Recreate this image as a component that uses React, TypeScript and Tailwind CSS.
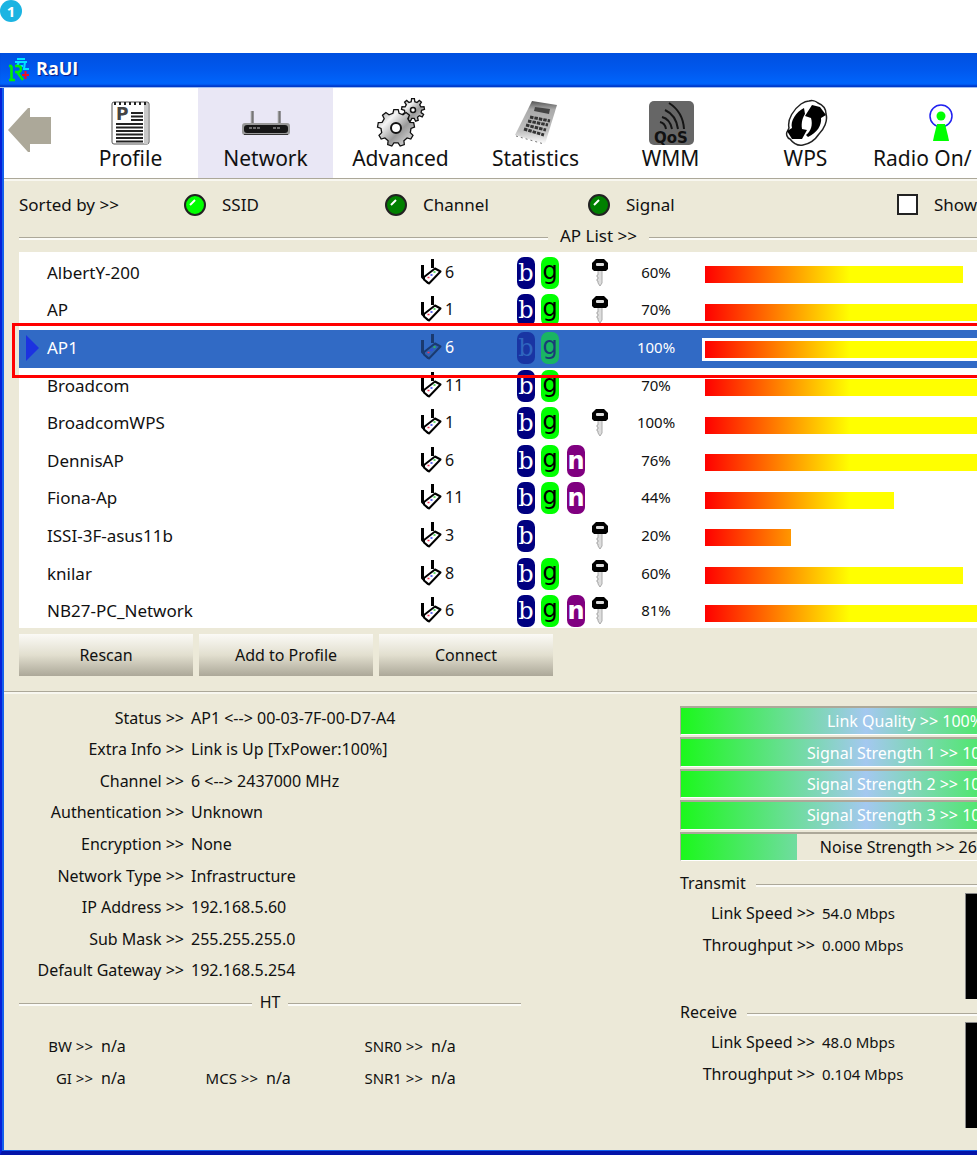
import React from 'react';
import clsx from 'clsx';

type Mode = 'b' | 'g' | 'n';

const accessPoints: { ssid: string; channel: number; modes: Mode[]; locked: boolean; signal: number; selected?: boolean }[] = [
  { ssid: 'AlbertY-200', channel: 6, modes: ['b', 'g'], locked: true, signal: 60 },
  { ssid: 'AP', channel: 1, modes: ['b', 'g'], locked: true, signal: 70 },
  { ssid: 'AP1', channel: 6, modes: ['b', 'g'], locked: false, signal: 100, selected: true },
  { ssid: 'Broadcom', channel: 11, modes: ['b', 'g'], locked: false, signal: 70 },
  { ssid: 'BroadcomWPS', channel: 1, modes: ['b', 'g'], locked: true, signal: 100 },
  { ssid: 'DennisAP', channel: 6, modes: ['b', 'g', 'n'], locked: false, signal: 76 },
  { ssid: 'Fiona-Ap', channel: 11, modes: ['b', 'g', 'n'], locked: false, signal: 44 },
  { ssid: 'ISSI-3F-asus11b', channel: 3, modes: ['b'], locked: true, signal: 20 },
  { ssid: 'knilar', channel: 8, modes: ['b', 'g'], locked: true, signal: 60 },
  { ssid: 'NB27-PC_Network', channel: 6, modes: ['b', 'g', 'n'], locked: true, signal: 81 },
];

const linkInfo = [
  ['Status', 'AP1 <--> 00-03-7F-00-D7-A4'],
  ['Extra Info', 'Link is Up [TxPower:100%]'],
  ['Channel', '6 <--> 2437000 MHz'],
  ['Authentication', 'Unknown'],
  ['Encryption', 'None'],
  ['Network Type', 'Infrastructure'],
  ['IP Address', '192.168.5.60'],
  ['Sub Mask', '255.255.255.0'],
  ['Default Gateway', '192.168.5.254'],
];

const htInfo = ['BW', '', 'SNR0', 'GI', 'MCS', 'SNR1'];

const meters = [
  { label: 'Link Quality', value: 100 },
  { label: 'Signal Strength 1', value: 100 },
  { label: 'Signal Strength 2', value: 100 },
  { label: 'Signal Strength 3', value: 100 },
  { label: 'Noise Strength', value: 26 },
];

const gearPath = (cx: number, cy: number, outer: number, inner: number, teeth: number) => {
  const points: string[] = [];
  const step = (Math.PI * 2) / teeth;
  for (let i = 0; i < teeth; i++) {
    [[-0.3, inner], [-0.17, outer], [0.17, outer], [0.3, inner]].forEach(([offset, r]) => {
      const a = (i + offset) * step - Math.PI / 2;
      points.push(`${(cx + r * Math.cos(a)).toFixed(1)},${(cy + r * Math.sin(a)).toFixed(1)}`);
    });
  }
  return `M${points.join('L')}Z`;
};

const AppLogo = () => (
  <svg width="22" height="24" viewBox="0 0 22 24" fill="none" aria-hidden="true">
    <path d="M9 1h8M7 4h12M11 4l-2 4h6M17 4l-1 7h5" stroke="#00e5ff" strokeWidth="2" />
    <path d="M1 8h3M3.500 8v14M1 22h6M7 8h3c4 0 4 6 0 6H7M9 14l6 8" stroke="#00f000" strokeWidth="2.500" />
    <path d="M14 17h7M17.500 13v8" stroke="#f01020" strokeWidth="2" />
  </svg>
);

const ProfileIcon = () => (
  <svg width="40" height="46" viewBox="0 0 40 46" aria-hidden="true">
    <rect x="1" y="2" width="37" height="42" rx="2" fill="#fff" stroke="#555" />
    <path d="M34 3v41M36 3v41" stroke="#c8c8c8" strokeWidth="2" />
    <path d="M4 2v3M9 2v3M14 2v3M19 2v3M24 2v3M29 2v3M34 2v3" stroke="#222" strokeWidth="2" />
    <text x="5" y="20" fontFamily="DejaVu Sans" fontWeight="bold" fontSize="17" fill="#444">P</text>
    <path d="M20 13h12M20 16.500h12M20 20h12M5 24h27M5 27.500h27M5 31h27M5 34.500h27M5 38h27M5 41.500h27" stroke="#222" strokeWidth="1.800" />
  </svg>
);

const RouterIcon = () => (
  <svg width="50" height="26" viewBox="0 0 50 26" aria-hidden="true">
    <path d="M11 1v13M38 1v13" stroke="#999" strokeWidth="2.500" />
    <path d="M12 1v13M39 1v13" stroke="#555" strokeWidth="1" />
    <rect x="1" y="13" width="48" height="12" rx="3" fill="#999" />
    <rect x="3" y="15" width="44" height="8" rx="3" fill="#161616" />
    <path d="M8 18h11M32 18h8" stroke="#8a8a8a" strokeWidth="1.500" strokeDasharray="3 1" />
    <path d="M3 24.500h44" stroke="#333" />
  </svg>
);

const GearsIcon = () => (
  <svg width="50" height="50" viewBox="0 0 50 50" aria-hidden="true">
    <defs>
      <linearGradient id="steel" x1="0" y1="0" x2="1" y2="1">
        <stop offset="0" stopColor="#888" />
        <stop offset="0.3" stopColor="#f4f4f4" />
        <stop offset="0.6" stopColor="#999" />
        <stop offset="1" stopColor="#eee" />
      </linearGradient>
    </defs>
    <path d={gearPath(37, 12, 11.5, 8.5, 9)} fill="url(#steel)" stroke="#111" strokeWidth="1.300" />
    <circle cx="37" cy="12" r="2.500" fill="#fff" stroke="#111" strokeWidth="1.500" />
    <path d={gearPath(20, 30, 18.5, 15, 9)} fill="url(#steel)" stroke="#111" strokeWidth="1.300" />
    <circle cx="20" cy="30" r="5" fill="#fff" stroke="#111" strokeWidth="2" />
  </svg>
);

const CalculatorIcon = () => (
  <svg width="44" height="46" viewBox="0 0 44 46" aria-hidden="true">
    <defs>
      <linearGradient id="calc" x1="0" y1="0" x2="0" y2="1">
        <stop offset="0" stopColor="#555" />
        <stop offset="0.2" stopColor="#aaa" />
        <stop offset="0.7" stopColor="#c0c0c0" />
        <stop offset="1" stopColor="#fff" />
      </linearGradient>
    </defs>
    <path d="M18 1L43 5L31 44L1 35Z" fill="url(#calc)" />
    <path d="M21 7l15 2-1 5-15-3z" fill="#444" />
    <path d="M16 17l20 4M14 21l20 4M12 25l20 5M10 29l20 6" stroke="#333" strokeWidth="3" strokeDasharray="3.500 1" />
    <path d="M2 36l28 8" stroke="#777" strokeDasharray="2 3" />
  </svg>
);

const QosIcon = () => (
  <svg width="46" height="46" viewBox="0 0 46 46" fill="none" aria-hidden="true">
    <rect x="1" y="1" width="45" height="44" rx="5" fill="#666" />
    <path d="M12 22q5 1 6 7M14 17q8 2 10 12M17 10q11 5 13 19M21 3q14 9 15 26" stroke="#151515" strokeWidth="2" />
    <text x="6" y="43" fontFamily="DejaVu Sans" fontWeight="bold" fontSize="15" fill="#111">QoS</text>
  </svg>
);

const WpsIcon = () => (
  <svg width="48" height="48" viewBox="0 0 48 48" aria-hidden="true">
    <path d="M27 2c3-1 7 0 9 2 5 2 8 6 8 11 2 7-2 15-7 20-4 6-10 10-16 11-5 1-10-2-13-6-3-1-4-5-3-7l2-4c-2-9 5-19 12-24 3-2 5-3 8-3Z" fill="#fff" stroke="#222" strokeWidth="1.500" />
    <path d="M22 9c-8 4-14 13-12 20l-5 3 5 8h10l5-9-5-1c-1-7 1-12 3-15Z" fill="#000" />
    <path d="M26 38c9-4 14-12 13-19l5-3-6-8-8-2-7 11 6 2c2 7 0 13-5 17Z" fill="#000" />
  </svg>
);

const RadioIcon = () => (
  <svg width="26" height="38" viewBox="0 0 26 38" aria-hidden="true">
    <circle cx="13" cy="12" r="11" fill="none" stroke="#2020f0" strokeWidth="1.500" />
    <path d="M9 20h8l3 12 1 5H5l1-5z" fill="#00ff00" />
    <circle cx="13" cy="12" r="4.500" fill="#00ff00" />
  </svg>
);

const DeviceIcon: React.FC<{ selected?: boolean }> = ({ selected }) => (
  <svg width="22" height="26" viewBox="0 0 22 26" strokeLinejoin="round" aria-hidden="true">
    <path d="M2.500 6v12l6 6M12.500 0v9" fill="none" stroke={selected ? '#1a3a70' : '#000'} strokeWidth="3" />
    <path d="M4 18L15 9.500l5.500 3L9 24.500l-5-4Z" fill={selected ? '#2f62b4' : '#fff'} stroke={selected ? '#1a3a70' : '#000'} strokeWidth="2" />
    <path d="M7.500 18.500h2" stroke="#f03050" strokeWidth="1.500" />
    <path d="M10.500 16h2" stroke="#3040f0" strokeWidth="1.500" />
    <path d="M13.500 13h2" stroke="#30d040" strokeWidth="1.500" />
  </svg>
);

const KeyIcon = () => (
  <svg width="16" height="28" viewBox="0 0 16 28" className="block" aria-label="Secured">
    <path d="M6 11h4v13l-2 3-2-3v-2H5v-2h1v-2H5v-2h1Z" fill="#ddd" stroke="#aaa" />
    <path d="M4 0h8l4 4v6l-2 2H2l-2-2V4Z" fill="#000" />
    <rect x="4" y="4" width="8" height="3" rx="1" fill="#ddd" />
  </svg>
);

const toolbar = [
  { label: 'Profile', icon: <ProfileIcon /> },
  { label: 'Network', icon: <RouterIcon /> },
  { label: 'Advanced', icon: <GearsIcon /> },
  { label: 'Statistics', icon: <CalculatorIcon /> },
  { label: 'WMM', icon: <QosIcon /> },
  { label: 'WPS', icon: <WpsIcon /> },
  { label: 'Radio On/', icon: <RadioIcon /> },
];

const ModeBadge: React.FC<{ mode: Mode; selected?: boolean }> = ({ mode, selected }) => (
  <span
    className={clsx(
      'flex h-8 w-[18px] items-center justify-center overflow-hidden rounded-[7px] text-2xl leading-8',
      mode === 'b' && "font-['DejaVu_Serif',serif]",
      mode === 'g' && "mr-0.5 pb-1 font-['DejaVu_Sans',sans-serif]",
      mode === 'n' && "bg-[#800080] font-['DejaVu_Sans',sans-serif] font-bold text-white",
      mode === 'b' && (selected ? 'bg-[#1935a3] text-[#2f66bf]' : 'bg-[#000080] text-white'),
      mode === 'g' && (selected ? 'bg-[#1ab463] text-[#1a3a78]' : 'bg-[#00ff00] text-black'),
    )}
  >
    {mode}
  </span>
);

const Rule: React.FC<{ className?: string }> = ({ className }) => (
  <div className={clsx('mt-1 h-[3px] border-t border-[#aca899] bg-white/80', className)}></div>
);

const SortOption: React.FC<{ label: string; checked?: boolean }> = ({ label, checked }) => (
  <label className="flex items-center gap-4">
    <span className="grid">
      <input
        type="radio"
        name="sort"
        defaultChecked={checked}
        className="col-start-1 row-start-1 h-[22px] w-[22px] appearance-none rounded-full border-2 border-[#222] bg-[#008000] checked:bg-[#00ff00]"
      />
      <svg width="22" height="22" viewBox="0 0 22 22" fill="none" className="pointer-events-none col-start-1 row-start-1" aria-hidden="true">
        <path d="M6 11l5-5" stroke="#fff" strokeWidth="2" />
      </svg>
    </span>
    {label}
  </label>
);

const Traffic: React.FC<{ title: string; speed: string; throughput: string }> = ({ title, speed, throughput }) => (
  <section>
    <div className="flex h-4 items-center gap-2.5">
      <h2>{title}</h2>
      <Rule className="flex-1" />
    </div>
    <div className="mt-0.5 flex h-[106px]">
      <dl className="grid w-[285px] shrink-0 auto-rows-[32px] grid-cols-[135px_auto] items-center gap-x-[7px] pt-1 whitespace-nowrap">
        <dt className="text-right">Link Speed &gt;&gt;</dt>
        <dd className="text-[15px] leading-4">{speed} Mbps</dd>
        <dt className="text-right">Throughput &gt;&gt;</dt>
        <dd className="text-[15px] leading-4">{throughput} Mbps</dd>
      </dl>
      <div className="flex-1 border-t border-l border-[#888] bg-black"></div>
    </div>
  </section>
);

const App: React.FC = () => {
  return (
    <div className="overflow-hidden bg-white font-['Noto_Sans',sans-serif] text-base leading-4 text-[#111]">
      <div className="h-[53px]">
        <span className="flex h-[22px] w-[22px] items-center justify-center rounded-full bg-[#1bb4e2] text-[15px] font-bold text-white">1</span>
      </div>

      <div className="border-b-4 border-l-2 border-[#0414a8] border-l-[#0620d8] bg-[#ece9d8] pb-px pl-0.5 shadow-[inset_2px_-1px_#1460ec]">
        <header className="-ml-1 flex h-[35px] items-center gap-1.5 border-b border-[#9dbcf0] bg-linear-to-b from-[#0050e0] via-[#0058ee] via-50% to-[#0068ff] pl-2 shadow-[inset_0_-3px_2px_-1px_#0038c8]">
          <AppLogo />
          <h1 className="pb-1 font-['Open_Sans',sans-serif] text-lg leading-6 font-bold text-white [text-shadow:1px_1px_1px_#0a1883]">RaUI</h1>
        </header>

        <nav className="flex h-[90px] overflow-hidden bg-white">
          <button aria-label="Back" className="flex w-[59px] shrink-0 pt-5 pl-1">
            <svg width="43" height="44" viewBox="0 0 43 44" aria-hidden="true">
              <path d="M0 22L20 0h2v9h21v27H22v8h-2Z" fill="#aca899" />
            </svg>
          </button>
          {toolbar.map(({ label, icon }) => (
            <button
              key={label}
              className={clsx('flex w-[135px] shrink-0 flex-col items-center', label === 'Network' && 'bg-[#e9e7f5]')}
            >
              <span className="flex h-[58px] items-center pt-3">{icon}</span>
              <span className={clsx('text-[21px] leading-6 whitespace-nowrap', label === 'Radio On/' && 'self-start')}>{label}</span>
            </button>
          ))}
        </nav>
        <div className="h-[3px] border-t border-[#aca899] bg-[#f8f7f0]"></div>

        <main className="pb-[22px]">
          <div className="pl-[15px]">
            <div className="grid h-[47px] grid-cols-[165px_201px_203px_309px_auto] items-center text-[17px] leading-4 whitespace-nowrap">
              <span>Sorted by &gt;&gt;</span>
              <SortOption label="SSID" checked />
              <SortOption label="Channel" />
              <SortOption label="Signal" />
              <label className="flex items-center gap-4">
                <input type="checkbox" className="h-[21px] w-[21px] shrink-0 appearance-none border-2 border-[#222] bg-white" />
                Show
              </label>
            </div>

            <div className="mb-2 flex h-4 items-center gap-3">
              <Rule className="w-[529px]" />
              <h2 className="text-[17px] leading-4 whitespace-nowrap">AP List &gt;&gt;</h2>
              <Rule className="flex-1" />
            </div>

            <div className="relative">
              <div className="h-[376px] overflow-hidden bg-white pt-[3px]">
                <table className="h-[376px] w-full table-fixed border-collapse">
                  <colgroup>
                    <col className="w-[401px]" />
                    <col className="w-[97px]" />
                    <col className="w-[75px]" />
                    <col className="w-[28px]" />
                    <col className="w-[72px]" />
                    <col />
                  </colgroup>
                  <tbody>
                    {accessPoints.map((ap) => (
                      <tr key={ap.ssid} className={clsx(ap.selected && 'bg-[#316ac5] text-white')}>
                        <td className="p-0 pb-0.5">
                          <div className="flex items-center text-[17px] leading-4">
                            <span className="w-7 pl-[7px]">
                              {ap.selected && (
                                <svg width="13" height="26" viewBox="0 0 13 26" aria-hidden="true">
                                  <path d="M0 0l13 13L0 26Z" fill="#1c32e0" />
                                </svg>
                              )}
                            </span>
                            {ap.ssid}
                          </div>
                        </td>
                        <td className="p-0 pb-1">
                          <div className="flex items-center gap-[3px]">
                            <DeviceIcon selected={ap.selected} />
                            {ap.channel}
                          </div>
                        </td>
                        <td className="p-0 pb-0.5">
                          <div className="flex gap-1.5">
                            {ap.modes.map((mode) => (
                              <ModeBadge key={mode} mode={mode} selected={ap.selected} />
                            ))}
                          </div>
                        </td>
                        <td className="p-0 pb-0.5">{ap.locked && <KeyIcon />}</td>
                        <td className="p-0 pb-1 text-center text-[15px] leading-4">{ap.signal}%</td>
                        <td className="p-0 pt-0.5 pl-[13px]">
                          <div
                            className={clsx('h-[17px] bg-[linear-gradient(90deg,#f00,#ff0_145px)]', ap.selected && 'outline-3 outline-white')}
                            style={{ width: `${Math.round(ap.signal * 4.3)}px` }}
                          ></div>
                        </td>
                      </tr>
                    ))}
                  </tbody>
                </table>
              </div>
              {/* Callout around the connected AP */}
              <div className="pointer-events-none absolute top-[71px] -right-2 -left-[7px] h-[55px] border-3 border-[#ff0000]"></div>
            </div>

            <div className="mt-1.5 mb-[15px] flex gap-1.5">
              {['Rescan', 'Add to Profile', 'Connect'].map((action) => (
                <button
                  key={action}
                  className="h-[42px] w-[174px] bg-linear-to-b from-[#fbfaf6] via-[#e2dfcf] to-[#aca899]"
                >
                  {action}
                </button>
              ))}
            </div>
          </div>

          <div className="h-[3px] border-t border-[#aca899] bg-[#f8f7f0]"></div>

          <div className="grid grid-cols-[661px_1fr] pt-2 pl-[15px]">
            <section>
              <dl className="grid h-[284px] grid-cols-[165px_auto] items-center gap-x-[7px]">
                {linkInfo.map(([label, value]) => (
                  <React.Fragment key={label}>
                    <dt className="text-right">{label} &gt;&gt;</dt>
                    <dd>{value}</dd>
                  </React.Fragment>
                ))}
              </dl>
              <div className="mt-2 flex h-4 w-[502px] items-center gap-2">
                <Rule className="flex-1" />
                <h2>HT</h2>
                <Rule className="flex-1" />
              </div>
              <dl className="mt-5 grid auto-rows-[32px] grid-cols-[165px_165px_165px] items-center">
                {htInfo.map((label, i) => (
                  <div key={i} className="flex gap-2">
                    {label && (
                      <>
                        <dt className="w-[74px] text-right text-[15px] leading-4">{label} &gt;&gt;</dt>
                        <dd>n/a</dd>
                      </>
                    )}
                  </div>
                ))}
              </dl>
            </section>

            <section className="min-w-0 pt-1">
              <div className="mb-3 grid h-[157px] w-[450px] auto-rows-fr">
                {meters.map(({ label, value }) => (
                  <div key={label} className="pb-0.5">
                    <div className="grid h-full items-center border border-t-2 border-[#aca899] border-b-white">
                      <div
                        className="col-start-1 row-start-1 h-full bg-[linear-gradient(90deg,#1cf81c,#70dca0_116px,#a4c8f0_185px,#70dca0_254px,#1cf81c_370px)]"
                        style={{ width: `${value}%` }}
                      ></div>
                      <span className={clsx('col-start-1 row-start-1 text-center', value === 100 && 'text-white')}>
                        {label} &gt;&gt; {value}%
                      </span>
                    </div>
                  </div>
                ))}
              </div>
              <Traffic title="Transmit" speed="54.0" throughput="0.000" />
              <div className="h-[5px]"></div>
              <Traffic title="Receive" speed="48.0" throughput="0.104" />
            </section>
          </div>
        </main>
      </div>
    </div>
  );
};

export default App;
